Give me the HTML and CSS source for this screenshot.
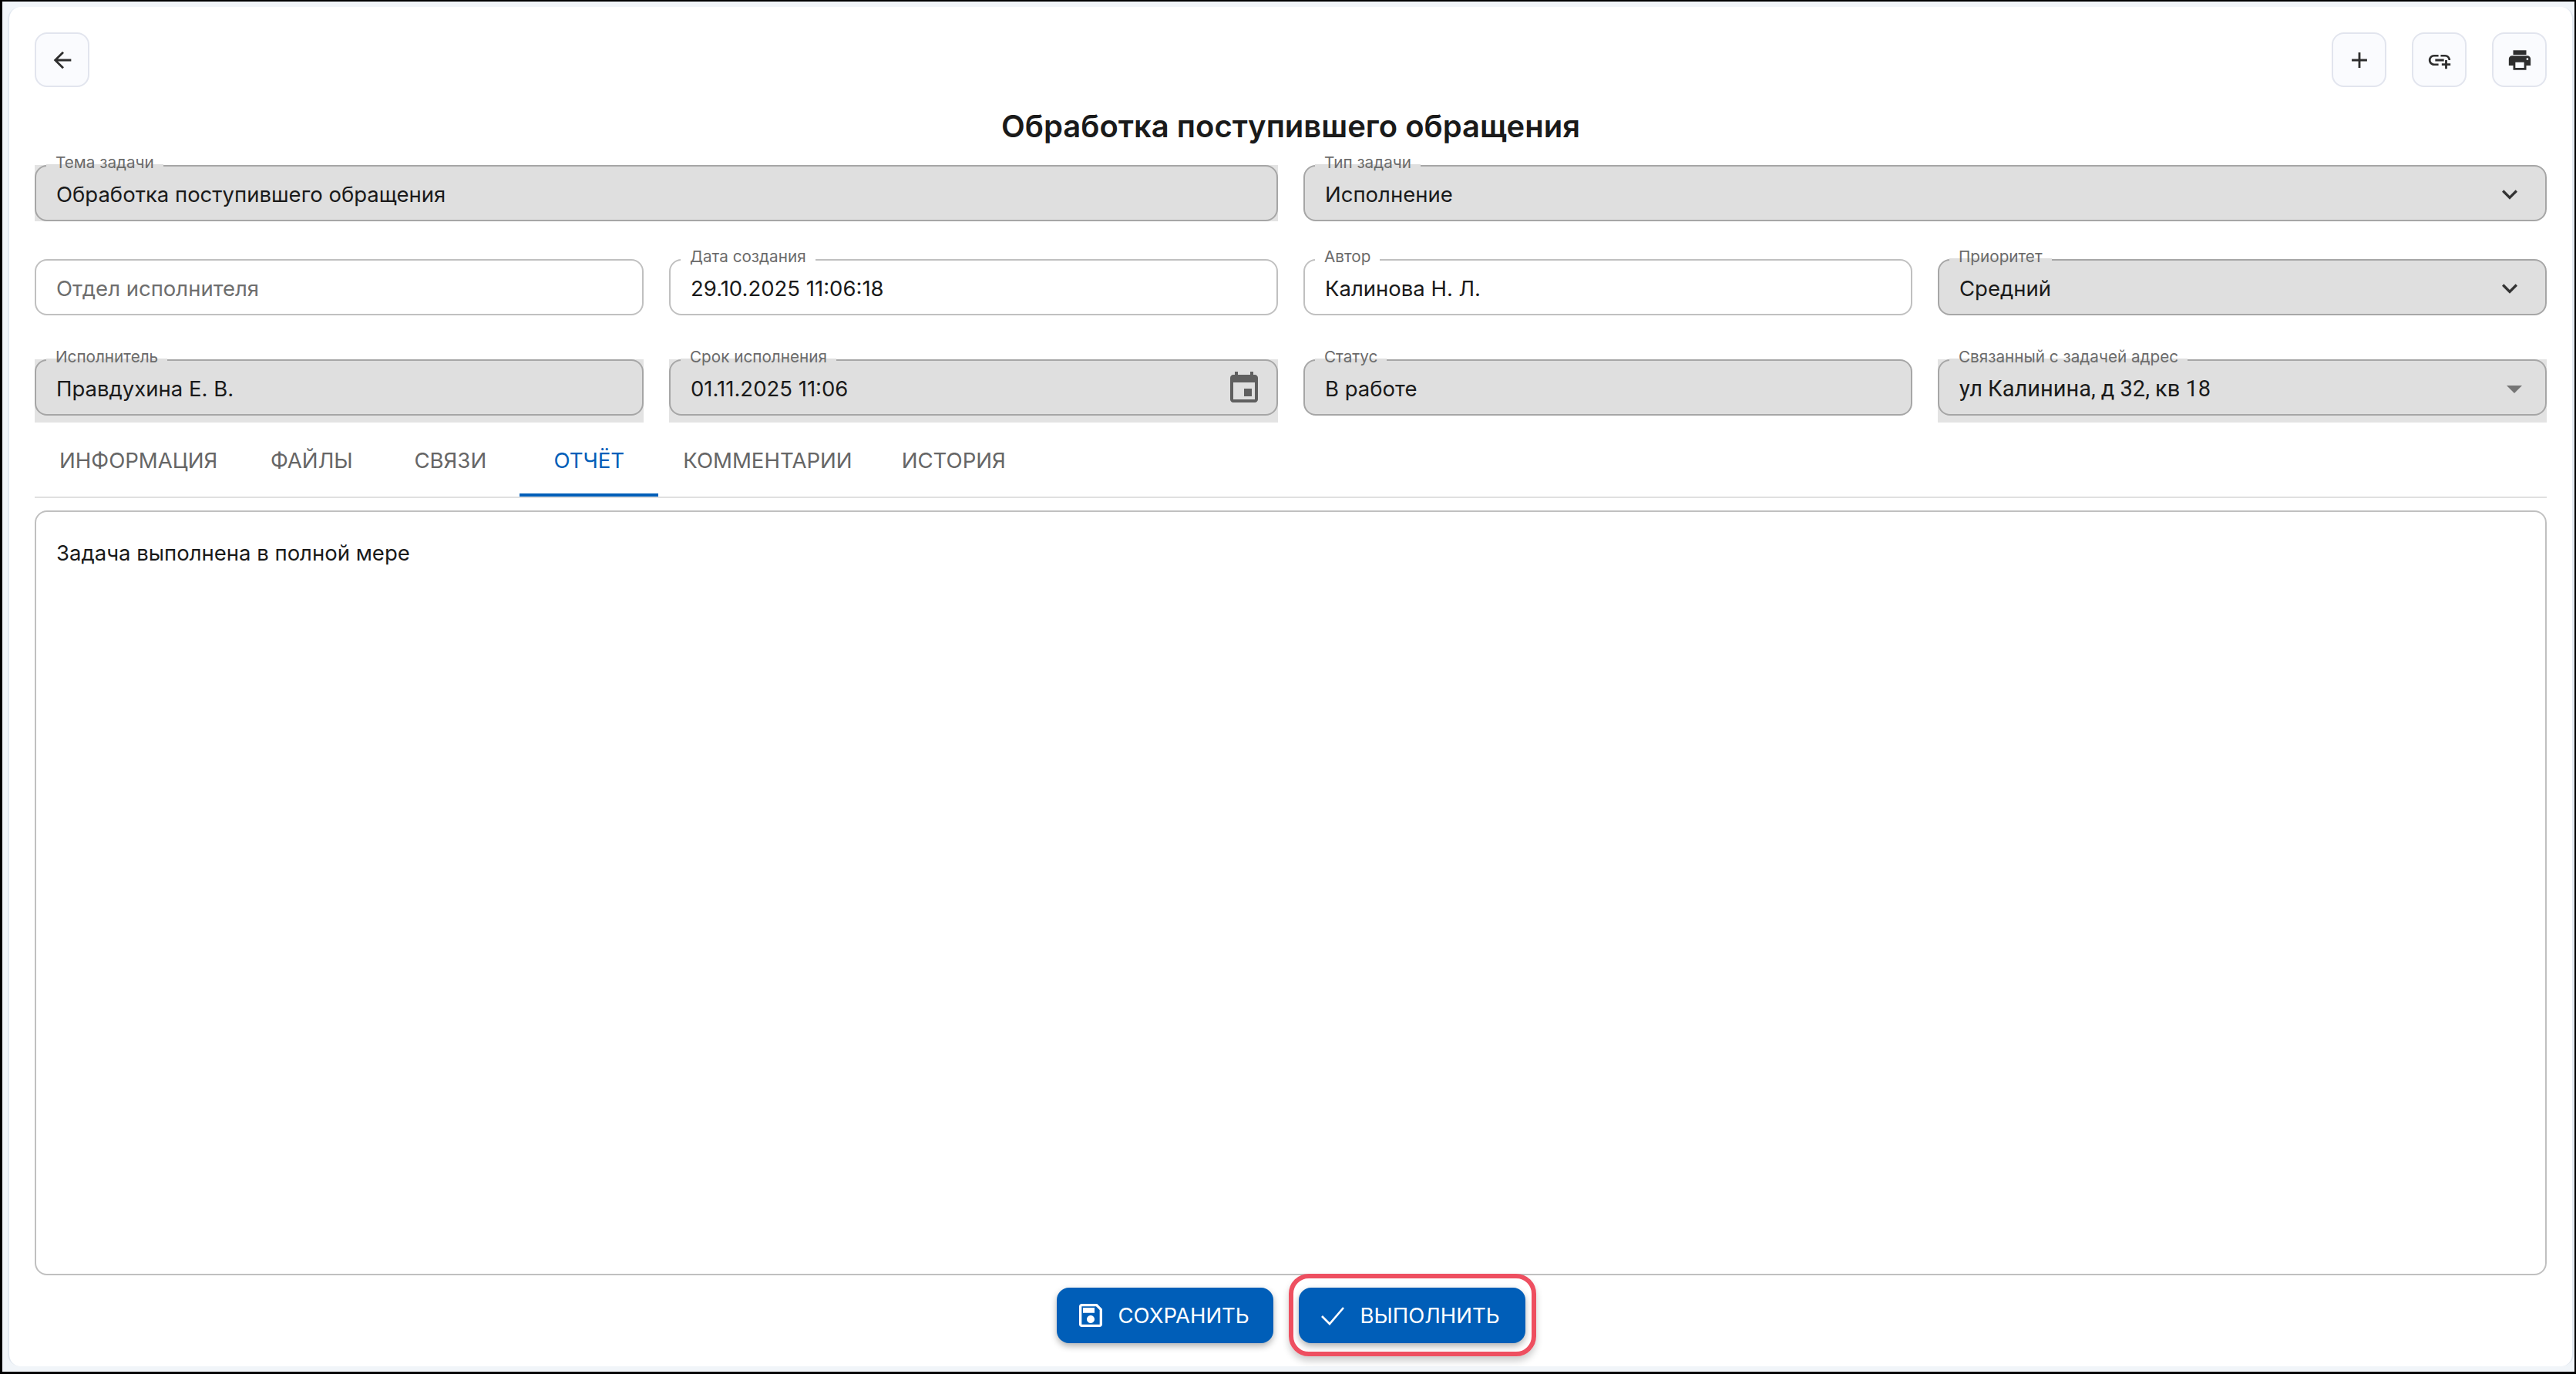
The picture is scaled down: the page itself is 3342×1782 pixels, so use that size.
FILE: index.html
```html
<!DOCTYPE html>
<html lang="ru">
<head>
<meta charset="utf-8">
<title>Обработка поступившего обращения</title>
<link rel="stylesheet" href="styles.css">
</head>
<body>
<div class="frame">
<div class="shell">
<main class="card">
  <header class="toolbar">
    <button class="icon-btn" aria-label="Назад"><svg viewBox="0 0 24 24"><path d="M20 11H7.83l5.59-5.59L12 4l-8 8 8 8 1.41-1.41L7.83 13H20z"/></svg></button>
    <div class="toolbar-right">
      <button class="icon-btn" aria-label="Добавить"><svg viewBox="0 0 24 24"><path d="M19 13h-6v6h-2v-6H5v-2h6V5h2v6h6z"/></svg></button>
      <button class="icon-btn" aria-label="Связать"><svg viewBox="0 0 24 24"><path d="M8 11h8v2H8zm12.1 1H22c0-2.76-2.24-5-5-5h-4v1.9h4c1.71 0 3.1 1.39 3.1 3.1M3.9 12c0-1.71 1.39-3.1 3.1-3.1h4V7H7c-2.76 0-5 2.24-5 5s2.24 5 5 5h4v-1.9H7c-1.71 0-3.1-1.39-3.1-3.1M19 12h-2v3h-3v2h3v3h2v-3h3v-2h-3z"/></svg></button>
      <button class="icon-btn" aria-label="Печать"><svg viewBox="0 0 24 24"><path d="M19 8H5c-1.66 0-3 1.34-3 3v6h4v4h12v-4h4v-6c0-1.66-1.34-3-3-3m-3 11H8v-5h8zm3-7c-.55 0-1-.45-1-1s.45-1 1-1 1 .45 1 1-.45 1-1 1m-1-9H6v4h12z"/></svg></button>
    </div>
  </header>
  <h1 class="title">Обработка поступившего обращения</h1>

  <section class="fields">
    <div class="field span2 disabled square"><span class="label">Тема задачи</span><span class="value">Обработка поступившего обращения</span></div>
    <div class="field span2 disabled"><span class="label">Тип задачи</span><span class="value">Исполнение</span><svg class="chev" viewBox="0 0 24 24"><path d="M7.41 8.59 12 13.17l4.59-4.58L18 10l-6 6-6-6z"/></svg></div>

    <div class="field"><span class="value placeholder">Отдел исполнителя</span></div>
    <div class="field"><span class="label">Дата создания</span><span class="value">29.10.2025 11:06:18</span></div>
    <div class="field"><span class="label">Автор</span><span class="value">Калинова Н. Л.</span></div>
    <div class="field disabled"><span class="label">Приоритет</span><span class="value">Средний</span><svg class="chev" viewBox="0 0 24 24"><path d="M7.41 8.59 12 13.17l4.59-4.58L18 10l-6 6-6-6z"/></svg></div>

    <div class="field low disabled square tall"><span class="label">Исполнитель</span><span class="value">Правдухина Е. В.</span></div>
    <div class="field low disabled square tall"><span class="label">Срок исполнения</span><span class="value">01.11.2025 11:06</span><svg class="cal" viewBox="0 0 24 24"><path d="M17 12h-5v5h5zM16 1v2H8V1H6v2H5c-1.11 0-1.99.9-1.99 2L3 19c0 1.1.89 2 2 2h14c1.1 0 2-.9 2-2V5c0-1.1-.9-2-2-2h-1V1zm3 18H5V8h14z"/></svg></div>
    <div class="field low disabled"><span class="label">Статус</span><span class="value">В работе</span></div>
    <div class="field low disabled square tall"><span class="label">Связанный с задачей адрес</span><span class="value roboto">ул Калинина, д 32, кв 18</span><svg class="caret" viewBox="0 0 24 24"><path d="M7 10l5 5 5-5z"/></svg></div>
  </section>

  <nav class="tabs">
    <span class="tab">Информация</span>
    <span class="tab">Файлы</span>
    <span class="tab">Связи</span>
    <span class="tab active">Отчёт</span>
    <span class="tab">Комментарии</span>
    <span class="tab">История</span>
  </nav>

  <div class="report">Задача выполнена в полной мере</div>

  <footer class="actions">
    <button class="action save"><svg viewBox="0 0 24 24"><path d="M17 3H5c-1.11 0-2 .9-2 2v14c0 1.1.89 2 2 2h14c1.1 0 2-.9 2-2V7zm2 16H5V5h11.17L19 7.83zm-7-7c-1.66 0-3 1.34-3 3s1.34 3 3 3 3-1.34 3-3-1.34-3-3-3M6 6h9v4H6z"/></svg>Сохранить</button>
    <div class="done">
      <button class="action run"><svg class="check" viewBox="0 0 24 24"><path d="M3.6 12.6 9.6 18.6 20.4 6"/></svg>Выполнить</button>
      <span class="highlight"></span>
    </div>
  </footer>
</main>
</div>
</div>
</body>
</html>
```
FILE: styles.css
```css
* { box-sizing: border-box; }
html, body { margin: 0; height: 100%; }
body { font-family: Inter, "Noto Sans", sans-serif; background: #000; color: #1a1a1a; }
.frame { height: 1782px; padding: 2px 2px 3px 3px; display: flex; }
.shell { flex: 1; display: flex; min-width: 0; background: #f1f5f9; padding: 7px 1px 7px 7px; }
.card {
  flex: 1; min-width: 0; display: flex; flex-direction: column;
  background: #fff; border-radius: 16px;
  border: solid #e2e8f0; border-width: 0 2px;
  padding: 33px 33px 0;
}
.toolbar { display: flex; justify-content: space-between; height: 71px; flex: none; }
.toolbar-right { display: flex; gap: 33px; }
.icon-btn {
  width: 71px; height: 71px; padding: 0; display: flex; align-items: center; justify-content: center;
  background: #fafbfe; border: 2px solid #e2e5ee; border-radius: 16px;
}
.icon-btn svg { width: 34px; height: 34px; fill: #2e2e2e; }
.title { margin: 27px 0 26px; flex: none; font-size: 40px; line-height: 48px; font-weight: 600; text-align: center; color: #1a1a1a; }
.fields { display: grid; grid-template-columns: repeat(4, 790px); column-gap: 33px; flex: none; isolation: isolate; }
.field {
  position: relative; height: 73px; margin-bottom: 49px; padding: 2px 26px 0;
  display: flex; align-items: center; justify-content: space-between;
  background: #fff; border: 2px solid #c0c0c0; border-radius: 16px;
}
.field.span2 { grid-column: span 2; }
.field.low { margin-top: 8px; margin-bottom: 9px; }
.field.disabled { background: #dfdfdf; border-color: #a6a6a6; }
.square::before { content: ""; position: absolute; inset: -2px; background: #e3e3e3; z-index: -1; }
.tall::before { bottom: -11px; }
.label {
  position: absolute; left: 13px; top: -18px; padding: 0 12px;
  font-size: 20.7px; line-height: 26px; color: #6b6b6b; white-space: nowrap;
  background: #fff;
}
.disabled .label { background: linear-gradient(#fff 0 15px, #dfdfdf 15px); }
.value { font-size: 27.5px; line-height: 34px; color: #1a1a1a; white-space: nowrap; }
.placeholder { color: #6e6e6e; }
.roboto { font-family: Roboto, sans-serif; font-size: 29px; }
.chev { width: 40px; height: 40px; fill: #333; }
.cal { width: 48px; height: 48px; fill: #5f5f5f; margin-right: -8px; }
.caret { width: 48px; height: 48px; fill: #757575; margin-right: -10px; }
.tabs { display: flex; height: 98px; flex: none; border-bottom: 2px solid #e0e0e0; }
.tab {
  min-width: 180px; padding: 2px 32px 0; display: flex; align-items: center; justify-content: center;
  font-size: 27.6px; text-transform: uppercase; color: #666; position: relative;
}
.tab.active { color: #005eb8; }
.tab.active::after { content: ""; position: absolute; left: 0; right: 0; bottom: 0; height: 4px; background: #005eb8; }
.report {
  flex: 1; margin-top: 16px; padding: 36px 26px; font-size: 27.5px; line-height: 34px;
  border: 2px solid #c0c0c0; border-radius: 16px; color: #1a1a1a;
}
.actions { display: flex; justify-content: center; gap: 33px; align-items: flex-start; height: 118px; flex: none; padding-top: 16px; }
.done { position: relative; }
.action {
  height: 72px; padding: 0 0 0 24px; display: flex; align-items: center; gap: 16px;
  background: #005eb8; color: #fff; border: none; border-radius: 16px;
  font: 400 27.5px Inter, sans-serif; text-transform: uppercase;
  box-shadow: 0 4px 8px rgba(0,0,0,.3);
}
.save { width: 281px; }
.run { width: 294px; }
.action svg { width: 40px; height: 40px; fill: #fff; }
.action svg.check { fill: none; stroke: #fff; stroke-width: 1.6; }
.highlight {
  position: absolute; top: -18px; bottom: -17px; left: -13px; right: -14px;
  border: 6px solid #ee4f60; border-radius: 26px; box-shadow: 0 6px 10px rgba(0,0,0,.2);
  pointer-events: none;
}
```
